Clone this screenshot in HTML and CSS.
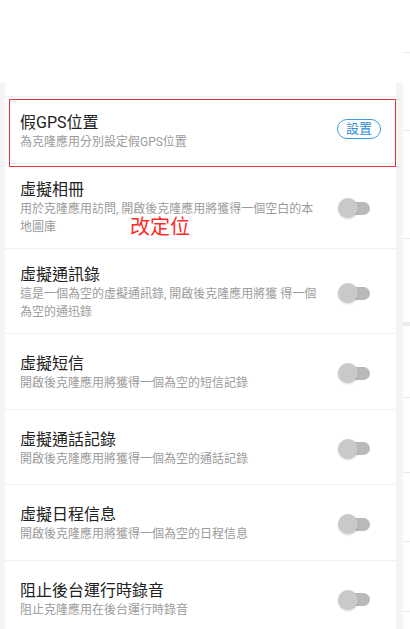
FILE: index.html
```html
<!DOCTYPE html>
<html lang="zh-Hant">
<head>
    <meta charset="UTF-8">
    <meta name="viewport" content="width=device-width, initial-scale=1.0">
    <title>隱私設置</title>
    <link rel="stylesheet" href="styles.css">
</head>
<body>

    <div class="screen">
        <div class="main">
            <div class="header"></div>

            <div class="panel">
                <div class="card">
                    <!-- Zbytek předchozího řádku -->
                    <div class="row row-stub"></div>

                    <div class="row row-gps">
                        <div class="text">
                            <div class="title">假GPS位置</div>
                            <div class="desc">為克隆應用分別設定假GPS位置</div>
                        </div>
                        <span class="btn-set">設置</span>
                        <div class="mark-box"></div>
                    </div>

                    <div class="row">
                        <div class="text">
                            <div class="title">虛擬相冊</div>
                            <div class="desc">用於克隆應用訪問, 開啟後克隆應用將獲得一個空白的本地圖庫</div>
                        </div>
                        <span class="switch"></span>
                        <div class="mark-text">改定位</div>
                    </div>

                    <div class="row">
                        <div class="text">
                            <div class="title">虛擬通訊錄</div>
                            <div class="desc">這是一個為空的虛擬通訊錄, 開啟後克隆應用將獲 得一個為空的通迅錄</div>
                        </div>
                        <span class="switch"></span>
                    </div>

                    <div class="row">
                        <div class="text">
                            <div class="title">虛擬短信</div>
                            <div class="desc">開啟後克隆應用將獲得一個為空的短信記錄</div>
                        </div>
                        <span class="switch"></span>
                    </div>

                    <div class="row">
                        <div class="text">
                            <div class="title">虛擬通話記錄</div>
                            <div class="desc">開啟後克隆應用將獲得一個為空的通話記錄</div>
                        </div>
                        <span class="switch"></span>
                    </div>

                    <div class="row">
                        <div class="text">
                            <div class="title">虛擬日程信息</div>
                            <div class="desc">開啟後克隆應用將獲得一個為空的日程信息</div>
                        </div>
                        <span class="switch"></span>
                    </div>

                    <div class="row">
                        <div class="text">
                            <div class="title">阻止後台運行時錄音</div>
                            <div class="desc">阻止克隆應用在後台運行時錄音</div>
                        </div>
                        <span class="switch"></span>
                    </div>
                </div>
            </div>
        </div>

        <!-- Okraj další stránky -->
        <div class="peek"></div>
    </div>

</body>
</html>
```

FILE: styles.css
```css
* {
    box-sizing: border-box;
}

body {
    margin: 0;
    background-color: #fff;
    font-family: Roboto, "Noto Sans CJK TC", sans-serif;
}

.screen {
    display: flex;
    width: 410px;
    height: 629px;
    overflow: hidden;
}

.main {
    width: 403px;
}

.header {
    height: 83px;
}

/* Šedé pozadí kolem karty */
.panel {
    background-color: #f4f4f4;
    padding: 0 7px 0 5px;
}

.card {
    background-color: #fff;
}

.row {
    position: relative;
    display: flex;
    align-items: center;
    min-height: 75.5px;
    padding: 16px 26px 12px 15px;
    border-bottom: 1px solid #f0f0f0;
}

.row-stub {
    min-height: 0;
    height: 14px;
    padding: 0;
}

.row-gps {
    min-height: 0;
    padding-right: 15px;
}

.text {
    width: 302px;
}

.title {
    font-size: 16px;
    line-height: 20px;
    color: #222;
}

.desc {
    font-size: 12px;
    line-height: 18px;
    color: #9b9b9b;
}

.btn-set {
    align-self: flex-start;
    margin-top: 6px;
    margin-left: auto;
    width: 44px;
    height: 20px;
    border: 1px solid #3d9be0;
    border-radius: 10px;
    font-size: 13px;
    line-height: 18px;
    text-align: center;
    color: #2e8bd6;
}

/* Vypínač */
.switch {
    position: relative;
    flex: none;
    width: 32px;
    height: 20px;
    margin-left: auto;
}

.switch::before {
    content: "";
    position: absolute;
    left: 7px;
    right: 0;
    top: 3.5px;
    height: 13px;
    border-radius: 7px;
    background-color: #b9b9b9;
}

.switch::after {
    content: "";
    position: absolute;
    left: 0;
    top: 0;
    width: 20px;
    height: 20px;
    border-radius: 50%;
    background-color: #c9c9c9;
    box-shadow: 0 1px 2px rgba(0, 0, 0, 0.18);
}

/* Poznámky přes obsah */
.mark-box {
    position: absolute;
    left: 4px;
    top: 2px;
    width: 387px;
    height: 68px;
    border: 1px solid #e5323a;
    z-index: 2;
}

.mark-text {
    position: absolute;
    left: 125px;
    top: 52px;
    font-family: "Noto Sans CJK SC", sans-serif;
    font-size: 20px;
    line-height: 20px;
    color: #ff2a2a;
}

.peek {
    width: 7px;
    background: linear-gradient(to bottom,
        #fff 52px, #e8e8e8 52px 53px,
        #fff 53px 130px, #e8e8e8 130px 131px,
        #fff 131px 238px, #e8e8e8 238px 239px,
        #fff 239px 322px, #ececec 322px 326px,
        #fff 326px 397px, #e8e8e8 397px 398px,
        #fff 398px 472px, #e8e8e8 472px 473px,
        #fff 473px 541px, #e8e8e8 541px 542px,
        #fff 542px 611px, #e8e8e8 611px 612px,
        #fff 612px);
}
```
